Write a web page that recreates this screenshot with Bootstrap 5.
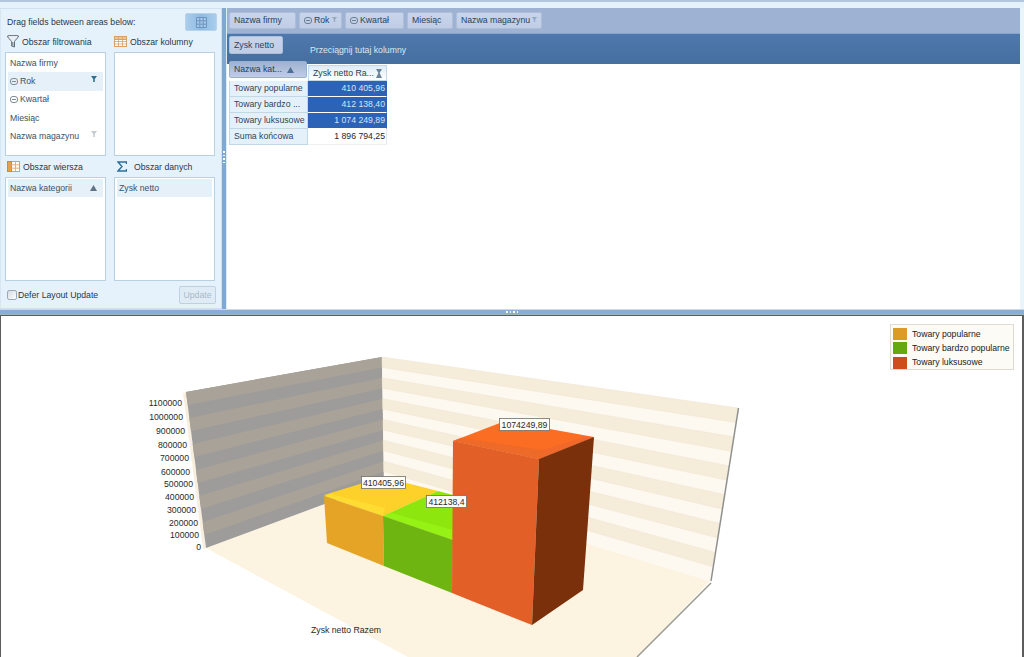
<!DOCTYPE html>
<html lang="pl">
<head>
<meta charset="utf-8">
<title>Pivot</title>
<link href="https://cdn.jsdelivr.net/npm/bootstrap@5.3.0/dist/css/bootstrap.min.css" rel="stylesheet">
<style>
html,body{height:657px;overflow:hidden;background:#fff}
body{font-family:"Liberation Sans",Arial,sans-serif;font-size:8.7px;line-height:1;color:#2f4358}
.app-shell{width:1024px;height:657px}
.upper-pane{height:309px;background:#e6f2fb;border-top:2px solid #b4c7dd;padding-top:6px;flex:none}
.field-panel{width:222px;flex:none;border:1px solid #cfe0ee;border-left-color:#d6e6f2;padding:0 5px 0 4px}
.title-row{height:25px;padding:4px 0 0 2px;color:#27384a}
.view-btn{width:32px;height:18px;margin-right:-1px;background:linear-gradient(90deg,#a9cdec,#8fbbe2 50%,#a9cdec);border:1px solid #b6d3ea;border-radius:2px;padding:0}
.zone-grid{display:grid;grid-template-columns:101px 101px;column-gap:8px}
.zone-head{height:21px;gap:3px;color:#27384a;white-space:nowrap;padding-top:1px}
.zone-head.first{height:20px;padding-top:0}
.zone-head.inset{padding-left:2px}
.zone-head.inset-wide{padding-left:3px}
.zone-box{height:104px;background:#fff;border:1px solid #b7d0e2;padding:1px 2px;overflow:hidden}
.zone-item{height:18.4px;padding:0 2px;color:#3a5268;white-space:nowrap}
.zone-item.on{background:#e6f0f8}
.minus-ico{margin-right:2px}
.foot-row{height:30px;padding:2px 0 0 2px;color:#27384a}
.chk{width:10px;height:10px;margin:0 1px 0 0;border:1px solid #9aa7b2;background:linear-gradient(135deg,#d5dde4,#fff);border-radius:0;flex:none}
.upd-btn{width:37px;height:18px;padding:0;font-size:8.7px;line-height:1;--bs-btn-disabled-opacity:1;--bs-btn-disabled-color:#a9b9c6;--bs-btn-disabled-bg:#dfecf6;--bs-btn-disabled-border-color:#bdd1e0;--bs-btn-border-radius:2px}
.v-split{width:5px;flex:none;background:#7fa8d2;position:relative;border-right:1px solid #dcebf6}
.v-dots{gap:2px;padding-top:143px}
.dot{width:1.5px;height:1.5px;background:#fff;display:block}
.pivot-pane{flex:1 1 auto;background:#fff;border-right:4px solid #eaf4fb;min-width:0}
.filter-band{height:26px;background:#9eb3d4;border-bottom:1px solid #86a4cf;padding:4px 0 0 2px;gap:3px}
.col-band{height:30px;background:linear-gradient(#4f78ae,#456f9f);padding:2px 0 0 2px}
.fld{height:17px;background:linear-gradient(#c8d4ea,#bfcde5);border:1px solid #aebed8;border-radius:2px;padding:0 4px;color:#284360;white-space:nowrap;position:relative;flex:none}
.hint{color:#dbe6f3;margin:10px 0 0 27px}
.body-wrap{padding-left:2px;margin-top:-3px}
.pvt-head{height:20px}
.corner-btn{width:78px;height:17px;background:linear-gradient(#9fb2d2,#c0cde2);border:1px solid #9db1cf;border-radius:2px;padding:0 4px;color:#243f5c;position:relative;z-index:1;white-space:nowrap}
.total-head{width:79px;height:16px;margin:4px 0 0 1px;background:linear-gradient(#dfecf7,#fff);border:1px solid #c4d8e7;padding:0 4px;color:#2b4056;white-space:nowrap}
.pvt-table{width:158px;border-collapse:separate;border-spacing:0;table-layout:fixed}
.pvt-table th{font-weight:400;width:79px;height:16px;padding:0 3px 0 4px;background:#e5f1fa;border:1px solid #c3d8e6;border-top:0;color:#2b4560;white-space:nowrap;overflow:hidden}
.pvt-table td{width:79px;height:16px;padding:0 1px 0 0;text-align:right;white-space:nowrap;border-right:1px solid #e0e6ec;border-bottom:1px solid #eef1f4}
.pvt-table td.sel{background:#2d63b7;color:#d6e2f5;border-color:#2d63b7;border-bottom-color:#fff}
.pvt-table td.tot{color:#262626;background:#fff}
.h-split{height:6px;flex:none;background:#89aed5;border-top:1px solid #cfd9e2;border-bottom:1px solid #9db7b5;gap:2px}
.chart-pane{flex:1 1 auto;position:relative;background:#fff;border:1px solid #5c5c5c;border-bottom:0;border-right-width:2px;overflow:hidden}
.chart-svg{display:block;position:absolute;left:-1px;top:-1px}
.chart-svg text{font-family:"Liberation Sans",Arial,sans-serif;font-size:8.7px;fill:#2a2a2a}
.legend-box{position:absolute;left:889px;top:8px;width:124px;height:46px;background:#fdfbf5;border:1px solid #dedbd0;padding:2px;color:#222}
.legend-row{height:14.3px;gap:5px;white-space:nowrap}
.swatch{width:14px;height:12px;flex:none}
</style>
</head>
<body>
<div class="app-shell d-flex flex-column">
  <div class="upper-pane d-flex">
    <div class="field-panel d-flex flex-column">
      <div class="title-row d-flex align-items-center justify-content-between">
        <span>Drag fields between areas below:</span>
        <button class="view-btn d-flex align-items-center justify-content-center" type="button" aria-label="Layout">
          <svg width="11" height="11" viewBox="0 0 11 11"><path d="M.5.5h10v10H.5zM3.8.5v10M7.2.5v10M.5 3.8h10M.5 7.2h10" fill="#a6c6e4" stroke="#6b96c2" stroke-width="1"/></svg>
        </button>
      </div>
      <div class="zone-grid">
        <div>
          <div class="zone-head first inset d-flex align-items-center">
            <svg width="12" height="13" viewBox="0 0 12 13"><path d="M.5 1c2-1 9-1 11 0 .3 1-3.600 4.500-4 5.500v5.500l-3-1V6.500C4 5.500.2 2 .5 1z" fill="#e9eef2" stroke="#5d6a74"/><path d="M4.500 7v4l2 .7V7z" fill="#8c979f"/></svg>
            <span>Obszar filtrowania</span>
          </div>
          <div class="zone-box">
            <div class="zone-item d-flex align-items-center">Nazwa firmy</div>
            <div class="zone-item on d-flex align-items-center">
              <svg class="minus-ico" width="8" height="7" viewBox="0 0 8 7"><rect x=".5" y=".5" width="7" height="6" rx="2.500" fill="none" stroke="#7d8b98"/><path d="M2 3.500h4" stroke="#7d8b98"/></svg>Rok
              <svg class="ms-auto me-1 align-self-start mt-1" width="6" height="6" viewBox="0 0 6 6"><path d="M0 0h6L3.800 3v3H2.200V3z" fill="#33708c"/></svg>
            </div>
            <div class="zone-item d-flex align-items-center">
              <svg class="minus-ico" width="8" height="7" viewBox="0 0 8 7"><rect x=".5" y=".5" width="7" height="6" rx="2.500" fill="none" stroke="#7d8b98"/><path d="M2 3.500h4" stroke="#7d8b98"/></svg>Kwartał
            </div>
            <div class="zone-item d-flex align-items-center">Miesiąc</div>
            <div class="zone-item d-flex align-items-center">Nazwa magazynu
              <svg class="ms-auto me-1 align-self-start mt-1" width="6" height="6" viewBox="0 0 6 6"><path d="M0 0h6L3.800 3v3H2.200V3z" fill="#c3ccd3"/></svg>
            </div>
          </div>
        </div>
        <div>
          <div class="zone-head first d-flex align-items-center">
            <svg width="13" height="11" viewBox="0 0 13 11"><rect x=".5" y=".5" width="12" height="10" fill="#fff" stroke="#d9a066"/><rect x=".5" y=".5" width="12" height="3" fill="#f0c48c" stroke="#d9a066"/><path d="M4.500 .5v10M8.500 .5v10M.5 5.500h12M.5 8h12" stroke="#d9a066" stroke-width=".8"/></svg>
            <span>Obszar kolumny</span>
          </div>
          <div class="zone-box"></div>
        </div>
        <div>
          <div class="zone-head inset d-flex align-items-center">
            <svg width="13" height="11" viewBox="0 0 13 11"><rect x=".5" y=".5" width="12" height="10" fill="#fff" stroke="#d9a066"/><rect x=".5" y=".5" width="4" height="10" fill="#eaa23e" stroke="#d08a30"/><path d="M8.500 .5v10M.5 3.800h12M.5 7.200h12" stroke="#d9a066" stroke-width=".8"/></svg>
            <span>Obszar wiersza</span>
          </div>
          <div class="zone-box">
            <div class="zone-item on d-flex align-items-center">Nazwa kategorii
              <svg class="ms-auto me-1" width="7" height="6" viewBox="0 0 7 6"><path d="M3.500 0L7 6H0z" fill="#5f7486"/></svg>
            </div>
          </div>
        </div>
        <div>
          <div class="zone-head inset-wide d-flex align-items-center">
            <svg class="me-1" width="10" height="11" viewBox="0 0 10 11"><path d="M9.500 3V1H1l4 4.500L1 10h8.500V8" fill="none" stroke="#2c6f9f" stroke-width="1.400"/></svg>
            <span>Obszar danych</span>
          </div>
          <div class="zone-box">
            <div class="zone-item on d-flex align-items-center">Zysk netto</div>
          </div>
        </div>
      </div>
      <div class="foot-row d-flex align-items-center justify-content-between">
        <label class="d-flex align-items-center"><input class="chk form-check-input" type="checkbox">Defer Layout Update</label>
        <button class="upd-btn btn" type="button" disabled>Update</button>
      </div>
    </div>
    <div class="v-split"><div class="v-dots d-flex flex-column align-items-center"><i class="dot"></i><i class="dot"></i><i class="dot"></i><i class="dot"></i></div></div>
    <div class="pivot-pane d-flex flex-column">
      <div class="filter-band d-flex">
        <div class="fld d-flex align-items-center" style="width:67px">Nazwa firmy</div>
        <div class="fld d-flex align-items-center" style="width:43px">
          <svg class="minus-ico" width="8" height="7" viewBox="0 0 8 7"><rect x=".5" y=".5" width="7" height="6" rx="2.500" fill="none" stroke="#6a7f97"/><path d="M2 3.500h4" stroke="#6a7f97"/></svg>Rok
          <svg class="ms-auto align-self-start mt-1" width="5" height="5" viewBox="0 0 6 6"><path d="M0 0h6L3.800 3v3H2.200V3z" fill="#97a8bf"/></svg>
        </div>
        <div class="fld d-flex align-items-center" style="width:59px">
          <svg class="minus-ico" width="8" height="7" viewBox="0 0 8 7"><rect x=".5" y=".5" width="7" height="6" rx="2.500" fill="none" stroke="#6a7f97"/><path d="M2 3.500h4" stroke="#6a7f97"/></svg>Kwartał
        </div>
        <div class="fld d-flex align-items-center" style="width:46px">Miesiąc</div>
        <div class="fld d-flex align-items-center" style="width:86px">Nazwa magazynu
          <svg class="ms-auto align-self-start mt-1" width="5" height="5" viewBox="0 0 6 6"><path d="M0 0h6L3.800 3v3H2.200V3z" fill="#97a8bf"/></svg>
        </div>
      </div>
      <div class="col-band d-flex">
        <div class="fld d-flex align-items-center" style="width:54px;height:18px">Zysk netto</div>
        <div class="hint">Przeciągnij tutaj kolumny</div>
      </div>
      <div class="body-wrap">
        <div class="pvt-head d-flex align-items-start">
          <div class="corner-btn d-flex align-items-center justify-content-between">Nazwa kat...
            <svg class="me-2" width="7" height="6" viewBox="0 0 7 6"><path d="M3.500 0L7 6H0z" fill="#4f6f93"/></svg>
          </div>
          <div class="total-head d-flex align-items-center justify-content-between">Zysk netto Ra...
            <svg width="6" height="9" viewBox="0 0 6 9"><path d="M0 0h6L3.600 4 6 9H0l2.400-5z" fill="#6d8397"/></svg>
          </div>
        </div>
        <table class="pvt-table">
          <tbody>
            <tr><th scope="row">Towary popularne</th><td class="sel">410 405,96</td></tr>
            <tr><th scope="row">Towary bardzo ...</th><td class="sel">412 138,40</td></tr>
            <tr><th scope="row">Towary luksusowe</th><td class="sel">1 074 249,89</td></tr>
            <tr><th scope="row">Suma końcowa</th><td class="tot">1 896 794,25</td></tr>
          </tbody>
        </table>
      </div>
    </div>
  </div>
  <div class="h-split d-flex align-items-center justify-content-center"><i class="dot"></i><i class="dot"></i><i class="dot"></i><i class="dot"></i></div>
  <div class="chart-pane">
    <svg class="chart-svg" width="1024" height="342" viewBox="0 315 1024 342" role="img" aria-label="Zysk netto Razem">
      <!-- floor -->
      <polygon points="206,548 384,482 710,581 637,657 408,657" fill="#fcf3e0"/>
      <path d="M711,583 L637,657" stroke="#9a9a90" stroke-width="1.500" fill="none"/>
      <!-- left wall -->
      <polygon points="183,393 186,392 206,548 203,549" fill="#f8eedd"/>
      <polygon points="186,392 382,357 384,482 206,548" fill="#9d9c9b"/>
      <g fill="#a8a298">
        <polygon points="186,392 382,357 382.200,367.400 187.700,405"/>
        <polygon points="189.300,418 382.300,377.800 382.500,388.300 191,431"/>
        <polygon points="192.700,444 382.700,398.700 382.800,409.100 194.300,457"/>
        <polygon points="196,470 383,419.500 383.200,429.900 197.700,483"/>
        <polygon points="199.300,496 383.300,440.300 383.500,450.800 201,509"/>
        <polygon points="202.700,522 383.700,461.200 383.800,471.600 204.300,535"/>
      </g>
      <!-- right wall -->
      <polygon points="382,357 738,408 710,581 384,482" fill="#fdf9f0"/>
      <g fill="#f6ecda" stroke="#eee5d3" stroke-width=".5">
        <polygon points="382,357 738,408 735.700,422.400 382.200,367.400"/>
        <polygon points="382.300,377.800 733.300,436.800 731,451.300 382.500,388.300"/>
        <polygon points="382.700,398.700 728.700,465.700 726.300,480.100 382.800,409.100"/>
        <polygon points="383,419.500 724,494.500 721.700,508.900 383.200,429.900"/>
        <polygon points="383.300,440.300 719.300,523.300 717,537.800 383.500,450.800"/>
        <polygon points="383.700,461.200 714.700,552.200 712.300,566.600 383.800,471.600"/>
      </g>
      <path d="M738.500,408 L711,581" stroke="#8f908c" stroke-width="1.500" fill="none"/>
      <!-- yellow bar -->
      <polygon points="324,495 383,477 438,491 383,516" fill="#fdd02a"/>
      <polygon points="324,496 331,494 385,508 383,516" fill="#fedc32"/>
      <polygon points="324,496 383,516 384,566 327,543" fill="#e5a426"/>
      <!-- green bar -->
      <polygon points="383,516 438,491 453,495 453,540" fill="#8ee60f"/>
      <polygon points="383,516 391,513 453,530 453,540" fill="#96f215"/>
      <polygon points="383,516 453,540 452,593 384,566" fill="#6fb512"/>
      <!-- orange bar -->
      <polygon points="453,441 505,421 594,437 539,459" fill="#fb6d22"/>
      <polygon points="453,441 461,438 543,450 539,459" fill="#ee6a28"/>
      <polygon points="539,459 543,450 584,437 594,437" fill="#f0682a"/>
      <polygon points="453,441 539,459 532,625 452,593" fill="#e25f28"/>
      <polygon points="539,459 594,437 583,590 532,625" fill="#7a300b"/>
      <!-- axis -->
      <g text-anchor="end">
        <text x="182" y="406">1100000</text>
        <text x="183" y="420">1000000</text>
        <text x="185" y="434">900000</text>
        <text x="187" y="448">800000</text>
        <text x="189" y="461">700000</text>
        <text x="190" y="475">600000</text>
        <text x="193" y="487">500000</text>
        <text x="194" y="500">400000</text>
        <text x="196" y="513">300000</text>
        <text x="198" y="526">200000</text>
        <text x="199" y="538">100000</text>
        <text x="201" y="550">0</text>
      </g>
      <text x="311" y="633">Zysk netto Razem</text>
      <!-- value labels -->
      <g fill="#fffdf8" stroke="#6f6f68" stroke-width=".8">
        <rect x="361.500" y="476.500" width="44" height="12"/>
        <rect x="426.500" y="495.500" width="40" height="12"/>
        <rect x="499.500" y="418.500" width="50" height="12"/>
      </g>
      <g text-anchor="middle">
        <text x="383.500" y="485.500">410405,96</text>
        <text x="446.500" y="504.500">412138,4</text>
        <text x="524.500" y="427.500">1074249,89</text>
      </g>
    </svg>
    <div class="legend-box">
      <div class="legend-row d-flex align-items-center"><span class="swatch" style="background:#dc9a26"></span>Towary popularne</div>
      <div class="legend-row d-flex align-items-center"><span class="swatch" style="background:#66a80f"></span>Towary bardzo popularne</div>
      <div class="legend-row d-flex align-items-center"><span class="swatch" style="background:#cf4d1c"></span>Towary luksusowe</div>
    </div>
  </div>
</div>
<script src="https://cdn.jsdelivr.net/npm/bootstrap@5.3.0/dist/js/bootstrap.bundle.min.js"></script>
</body>
</html>
